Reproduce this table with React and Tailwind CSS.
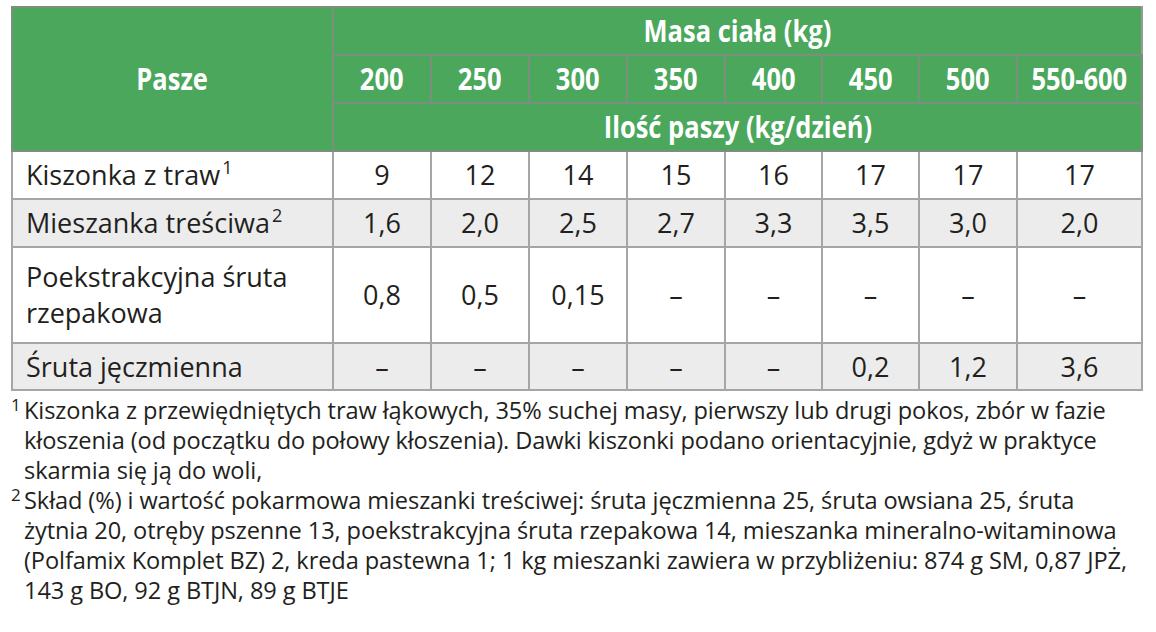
import React from "react";

const cols = ["200", "250", "300", "350", "400", "450", "500", "550-600"];
const Sup = ({ children }) => (
  <sup className="text-[18px] relative top-[-11px] ml-[2px]">{children}</sup>
);
const rows = [
  { name: <>Kiszonka z traw<Sup>1</Sup></>, vals: ["9", "12", "14", "15", "16", "17", "17", "17"], gray: false, h: "h-[48px]" },
  { name: <>Mieszanka treściwa<Sup>2</Sup></>, vals: ["1,6", "2,0", "2,5", "2,7", "3,3", "3,5", "3,0", "2,0"], gray: true, h: "h-[48px]" },
  { name: <>Poekstrakcyjna śruta<br />rzepakowa</>, vals: ["0,8", "0,5", "0,15", "–", "–", "–", "–", "–"], gray: false, h: "h-[96px]" },
  { name: <>Śruta jęczmienna</>, vals: ["–", "–", "–", "–", "–", "0,2", "1,2", "3,6"], gray: true, h: "h-[47px]" },
];

const widths = ["w-[98px]", "w-[98px]", "w-[98px]", "w-[98px]", "w-[97px]", "w-[97px]", "w-[98px]", "w-[125px]"];

function Cond({ children }) {
  return <span className="inline-block scale-x-[0.85] whitespace-nowrap">{children}</span>;
}

export default function App() {
  return (
    <div className="w-[1156px] h-[632px] bg-white text-[#231f20] pt-[6px]" style={{ fontFamily: '"Open Sans", "Noto Sans", sans-serif' }}>
      <table className="ml-[11px] w-[1130px] border-collapse table-fixed border-2 border-[#9a9a9a]">
        <colgroup>
          <col className="w-[321px]" />
          {widths.map((w, i) => <col key={i} className={w} />)}
        </colgroup>
        <thead className="bg-[#4aa75c] text-white font-bold text-[30px] leading-none">
          <tr className="h-[48px]">
            <th rowSpan={3} className="border-2 border-[#7c8f7e] text-center font-bold"><Cond>Pasze</Cond></th>
            <th colSpan={8} className="border-2 border-[#7c8f7e] border-r-[#9a9a9a] text-center font-bold"><Cond>Masa ciała (kg)</Cond></th>
          </tr>
          <tr className="h-[48px]">
            {cols.map((c) => (
              <th key={c} className="border-2 border-[#7c8f7e] text-center font-bold"><Cond>{c}</Cond></th>
            ))}
          </tr>
          <tr className="h-[48px]">
            <th colSpan={8} className="border-2 border-[#7c8f7e] text-center font-bold"><Cond>Ilość paszy (kg/dzień)</Cond></th>
          </tr>
        </thead>
        <tbody className="text-[27px] leading-[36px]">
          {rows.map((r, i) => (
            <tr key={i} className={`${r.h} ${r.gray ? "bg-[#ececec]" : "bg-white"}`}>
              <td className="border-2 border-[#a5a5a5] pl-[13px] pr-2 text-left align-middle whitespace-nowrap">{r.name}</td>
              {r.vals.map((v, j) => (
                <td key={j} className="border-2 border-[#a5a5a5] text-center align-middle">{v}</td>
              ))}
            </tr>
          ))}
        </tbody>
      </table>
      <div className="ml-[11px] mt-[4px] text-[23.6px] leading-[30px] whitespace-nowrap tracking-[-0.1px]">
        <div className="flex">
          <span className="w-[13px] text-[17px] leading-[20px] shrink-0">1</span>
          <div>
            Kiszonka z przewiędniętych traw łąkowych, 35% suchej masy, pierwszy lub drugi pokos, zbór w fazie<br />
            kłoszenia (od początku do połowy kłoszenia). Dawki kiszonki podano orientacyjnie, gdyż w praktyce<br />
            skarmia się ją do woli,
          </div>
        </div>
        <div className="flex">
          <span className="w-[13px] text-[17px] leading-[20px] shrink-0">2</span>
          <div>
            Skład (%) i wartość pokarmowa mieszanki treściwej: śruta jęczmienna 25, śruta owsiana 25, śruta<br />
            żytnia 20, otręby pszenne 13, poekstrakcyjna śruta rzepakowa 14, mieszanka mineralno-witaminowa<br />
            (Polfamix Komplet BZ) 2, kreda pastewna 1; 1 kg mieszanki zawiera w przybliżeniu: 874 g SM, 0,87 JPŻ,<br />
            143 g BO, 92 g BTJN, 89 g BTJE
          </div>
        </div>
      </div>
    </div>
  );
}
